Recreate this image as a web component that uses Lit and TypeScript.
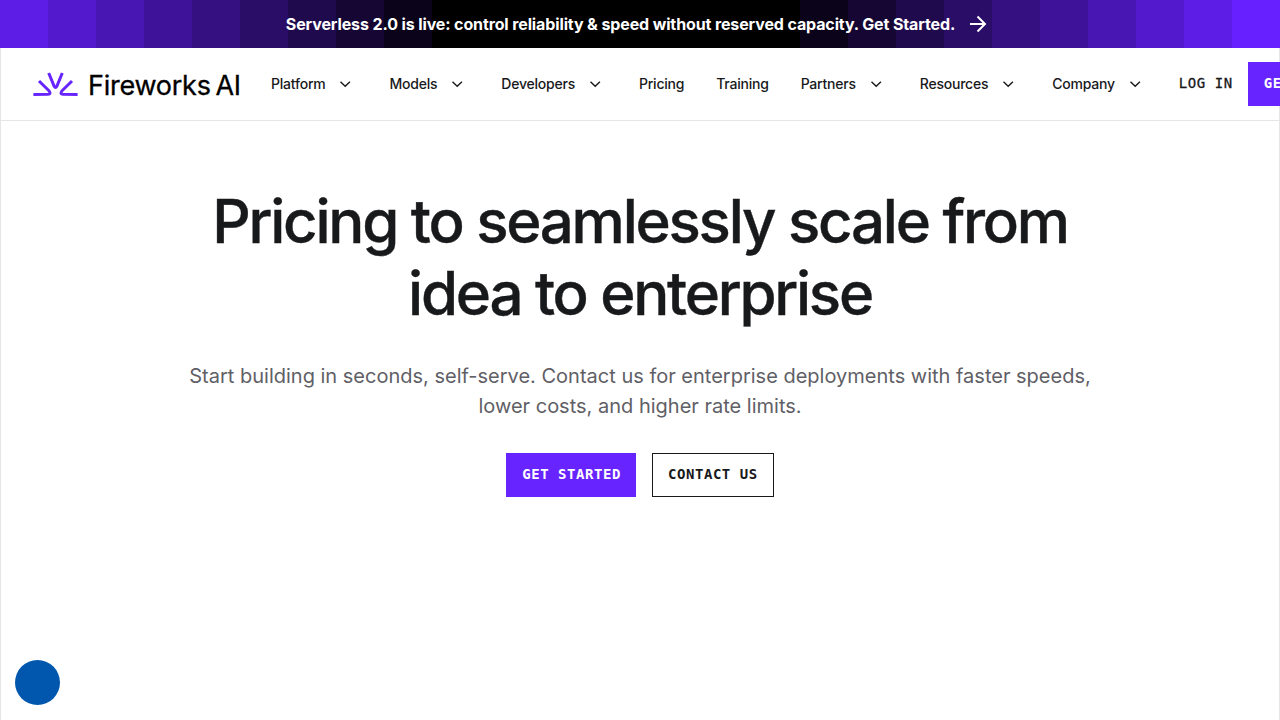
import { LitElement, html, css, svg } from 'lit';
import { customElement, property } from 'lit/decorators.js';

const NAV_ITEMS = [
  { label: 'Platform', menu: true },
  { label: 'Models', menu: true },
  { label: 'Developers', menu: true },
  { label: 'Pricing', menu: false },
  { label: 'Training', menu: false },
  { label: 'Partners', menu: true },
  { label: 'Resources', menu: true },
  { label: 'Company', menu: true },
];

@customElement('promo-banner')
export class PromoBanner extends LitElement {
  static styles = css`
    :host {
      display: block;
    }
    .banner {
      position: relative;
      display: flex;
      align-items: center;
      justify-content: center;
      height: 48px;
      overflow: hidden;
      background: #000;
      color: #fff;
      font-size: 16px;
      font-weight: 700;
      line-height: 24px;
    }
    .steps {
      position: absolute;
      inset: 0;
      display: flex;
      justify-content: space-between;
    }
    .side {
      display: flex;
    }
    .step {
      width: 48px;
      height: 48px;
      background: #6720ff;
    }
    .message {
      position: relative;
      display: flex;
      align-items: center;
      gap: 11px;
      margin-left: -4px;
    }
    .text {
      letter-spacing: -0.122px;
      white-space: nowrap;
    }
    svg {
      display: block;
    }
  `;

  render() {
    const left = [9, 8, 7, 6, 5, 4, 3, 2, 1];
    const right = [1, 2, 3, 4, 5, 6, 7, 8, 9, 10];
    const step = (n: number) => html`<div class="step" style="opacity: ${n / 10}"></div>`;
    return html`
      <div class="banner">
        <div class="steps">
          <div class="side">${left.map(step)}</div>
          <div class="side">${right.map(step)}</div>
        </div>
        <div class="message">
          <span class="text">Serverless 2.0 is live: control reliability &amp; speed without reserved capacity. Get Started.</span>
          <svg width="24" height="24" viewBox="0 0 24 24" fill="none" stroke="currentColor" stroke-width="2">
            <path d="M4 12h15M11.5 4.5L19 12l-7.5 7.5" />
          </svg>
        </div>
      </div>
    `;
  }
}

@customElement('action-button')
export class ActionButton extends LitElement {
  static styles = css`
    :host {
      display: block;
      flex: none;
    }
    .button {
      box-sizing: border-box;
      display: block;
      height: 44px;
      padding: 0 14px 2px 15px;
      border: 1px solid #6724ff;
      border-radius: 0;
      background: #6724ff;
      color: #fff;
      font: 700 14px/38px 'DejaVu Sans Mono', monospace;
      letter-spacing: 0.55px;
      white-space: nowrap;
    }
    .outline {
      padding: 0 15px 2px;
      border-color: #18191b;
      background: #fff;
      color: #18191b;
    }
  `;

  @property({ type: String })
  variant = 'primary';

  render() {
    return html`<button class="button ${this.variant}"><slot></slot></button>`;
  }
}

@customElement('site-header')
export class SiteHeader extends LitElement {
  static styles = css`
    :host {
      display: block;
    }
    .header {
      box-sizing: border-box;
      display: flex;
      align-items: center;
      height: 73px;
      padding-left: 32px;
      border-bottom: 1px solid #e6e6e9;
    }
    .logo {
      flex: none;
      display: flex;
      align-items: center;
      gap: 10px;
      width: 238px;
      color: #000;
    }
    .wordmark {
      margin-top: 3px;
      font-size: 27px;
      font-weight: 400;
      line-height: 32px;
      letter-spacing: -0.25px;
      word-spacing: -2.5px;
      -webkit-text-stroke: 0.3px currentColor;
      white-space: nowrap;
    }
    .nav {
      flex: none;
      display: flex;
      gap: 32px;
      color: #18191b;
      font-size: 14px;
      font-weight: 500;
      line-height: 24px;
      letter-spacing: -0.224px;
    }
    .item {
      display: flex;
      align-items: center;
      gap: 8px;
    }
    .login {
      flex: none;
      margin: 0 15px 2px 32px;
      color: #18191b;
      font: 400 14px/24px 'DejaVu Sans Mono', monospace;
      letter-spacing: 0.57px;
      -webkit-text-stroke: 0.3px currentColor;
      white-space: nowrap;
    }
    svg {
      display: block;
      flex: none;
    }
  `;

  private _chevron() {
    return html`
      <svg width="24" height="24" viewBox="0 0 24 24" fill="none" stroke="currentColor" stroke-width="1.4">
        ${svg`<path d="M7.5 9.8l4.7 4.5 4.7-4.5" />`}
      </svg>
    `;
  }

  render() {
    return html`
      <div class="header">
        <div class="logo">
          <svg width="45" height="24" viewBox="0 0 45 24" fill="none" stroke="#6724ff" stroke-width="3" stroke-linejoin="round">
            <path d="M15.7 1l5.5 13.4q1.3 2.4 2.6 0L29.3 1" />
            <path d="M6 9l10.2 10q2.2 3.1-1.2 3.3l-14.6.2" />
            <path d="M39 9L28.8 19q-2.2 3.1 1.2 3.3l14.6.2" />
          </svg>
          <span class="wordmark">Fireworks AI</span>
        </div>
        <nav class="nav">
          ${NAV_ITEMS.map(
            (item) => html`<div class="item"><span>${item.label}</span>${item.menu ? this._chevron() : ''}</div>`
          )}
        </nav>
        <span class="login">LOG IN</span>
        <action-button>GET STARTED</action-button>
      </div>
    `;
  }
}

@customElement('app-root')
export class AppRoot extends LitElement {
  static styles = css`
    :host {
      position: relative;
      display: flex;
      flex-direction: column;
      height: 720px;
      overflow: hidden;
      background: #fff;
      font-family: Inter, sans-serif;
    }
    .page {
      flex: 1;
      border: solid #e6e6e9;
      border-width: 0 1px;
    }
    .hero {
      display: flex;
      flex-direction: column;
      align-items: center;
      padding-top: 64px;
      text-align: center;
    }
    h1 {
      width: 920px;
      margin: 0;
      color: #18191b;
      font-size: 60px;
      font-weight: 500;
      line-height: 72px;
      letter-spacing: -2.25px;
      -webkit-text-stroke: 0.4px currentColor;
    }
    p {
      width: 920px;
      margin: 32px 0 32px;
      color: #5f6066;
      font-size: 20px;
      line-height: 30px;
    }
    .actions {
      display: flex;
      gap: 16px;
    }
    .bubble {
      position: absolute;
      left: 15px;
      bottom: 15px;
      width: 45px;
      height: 45px;
      border-radius: 50%;
      background: #0057ad;
    }
  `;

  render() {
    return html`
      <promo-banner></promo-banner>
      <div class="page">
        <site-header></site-header>
        <section class="hero">
          <h1>Pricing to seamlessly scale from<br />idea to enterprise</h1>
          <p>
            Start building in seconds, self-serve. Contact us for enterprise deployments with faster speeds,<br />
            lower costs, and higher rate limits.
          </p>
          <div class="actions">
            <action-button>GET STARTED</action-button>
            <action-button variant="outline">CONTACT US</action-button>
          </div>
        </section>
      </div>
      <div class="bubble"></div>
    `;
  }
}
